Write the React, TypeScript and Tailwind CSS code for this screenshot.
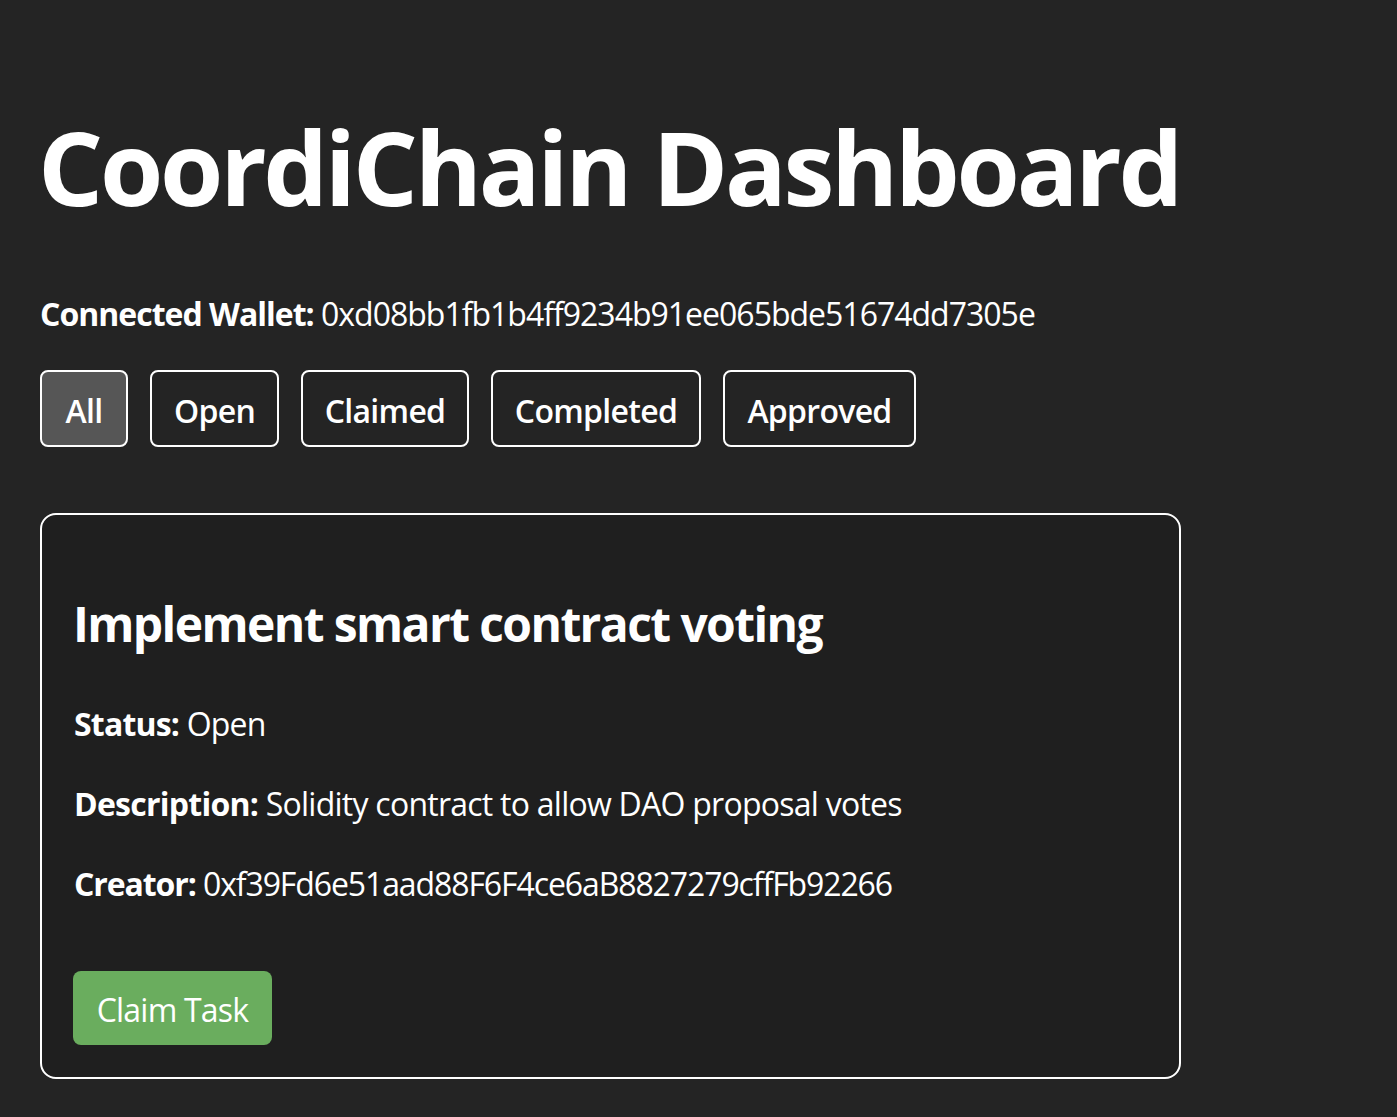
import React from "react";

const filters = [
  { label: "All", w: "w-[88px]" },
  { label: "Open", w: "w-[129px]" },
  { label: "Claimed", w: "w-[168px]" },
  { label: "Completed", w: "w-[210px]" },
  { label: "Approved", w: "w-[193px]" },
];

export default function App() {
  return (
    <div
      className="min-h-screen bg-[#242424] text-white px-[40px] pt-[40px] pb-[38px]"
      style={{ fontFamily: '"Open Sans", "Noto Sans", sans-serif' }}
    >
      <h1 className="text-[102.4px] font-bold leading-[1.1] mt-[71px] mb-[66px] tracking-[-3.3px] -ml-[2px]">
        CoordiChain Dashboard
      </h1>
      <p className="text-[32px] leading-[48px] mb-[32px] tracking-[-1px]">
        <strong className="font-bold">Connected Wallet:</strong> 0xd08bb1fb1b4ff9234b91ee065bde51674dd7305e
      </p>
      <div className="flex gap-[22px]">
        {filters.map((f, i) => (
          <button
            key={f.label}
            className={`${f.w} shrink-0 h-[77px] pt-[5px] px-0 rounded-[8px] border-2 border-white text-[32px] font-semibold tracking-[-0.7px] text-white ${
              i === 0 ? "bg-[#565656]" : "bg-transparent"
            }`}
          >
            {f.label}
          </button>
        ))}
      </div>
      <div className="mt-[66px] w-[1141px] border-2 border-white rounded-[16px] bg-[#1f1f1f] px-[32px] pt-[32px] pb-[32px]">
        <h2 className="text-[48px] font-bold leading-[72px] mt-[41px] mb-[40px] tracking-[-1.6px] -ml-[1px]">
          Implement smart contract voting
        </h2>
        <p className="text-[32px] leading-[48px] mb-[32px] tracking-[-0.8px]">
          <strong className="font-bold">Status:</strong> Open
        </p>
        <p className="text-[32px] leading-[48px] mb-[32px] tracking-[-0.75px]">
          <strong className="font-bold">Description:</strong> Solidity contract to allow DAO proposal votes
        </p>
        <p className="text-[32px] leading-[48px] tracking-[-1.1px]">
          <strong className="font-bold">Creator:</strong> 0xf39Fd6e51aad88F6F4ce6aB8827279cffFb92266
        </p>
        <button className="mt-[63px] h-[74px] w-[199px] pt-[4px] -ml-[1px] rounded-[8px] bg-[#6aad5e] text-[32px] font-medium tracking-[-0.8px] text-white">
          Claim Task
        </button>
      </div>
    </div>
  );
}
